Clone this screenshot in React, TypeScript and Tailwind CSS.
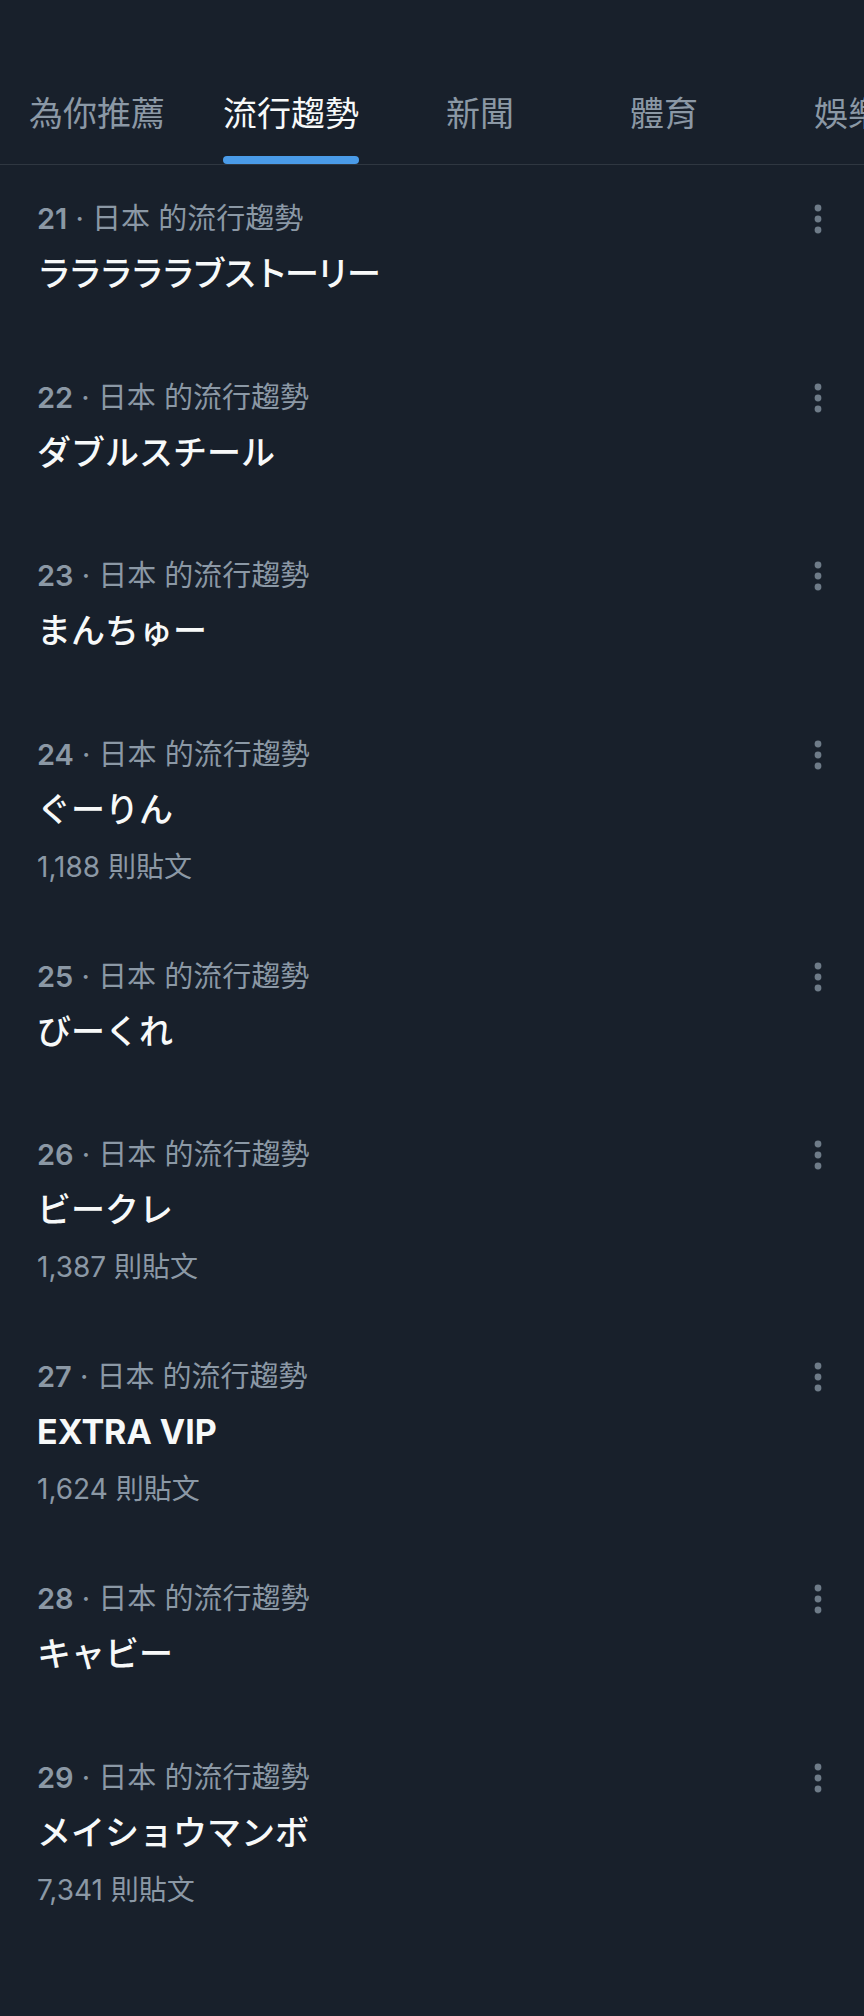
import React from "react";

type Trend = {
  rank: number;
  title: string;
  posts?: string;
  latin?: boolean;
  tight?: boolean;
};

const trends: Trend[] = [
  { rank: 21, title: "ラララララブストーリー", tight: true },
  { rank: 22, title: "ダブルスチール" },
  { rank: 23, title: "まんちゅー" },
  { rank: 24, title: "ぐーりん", posts: "1,188" },
  { rank: 25, title: "びーくれ" },
  { rank: 26, title: "ビークレ", posts: "1,387" },
  { rank: 27, title: "EXTRA VIP", posts: "1,624", latin: true },
  { rank: 28, title: "キャビー" },
  { rank: 29, title: "メイショウマンボ", posts: "7,341" },
];

const tabs = ["為你推薦", "流行趨勢", "新聞", "體育", "娛樂"];

function MoreIcon() {
  return (
    <svg width="8" height="30" viewBox="0 0 8 30" className="text-[#6e7b88]">
      <circle cx="4" cy="4" r="3.4" fill="currentColor" />
      <circle cx="4" cy="15" r="3.4" fill="currentColor" />
      <circle cx="4" cy="26" r="3.4" fill="currentColor" />
    </svg>
  );
}

function TrendRow({ trend }: { trend: Trend }) {
  return (
    <div
      className={`flex pl-[37px] pr-[35px] pt-[35px] ${
        trend.posts ? "pb-[38px]" : "pb-[47.5px]"
      }`}
    >
      <div className="flex-1 min-w-0">
        <div className="h-[38px] leading-[38px] text-[29px] text-[#8b98a5] whitespace-nowrap font-['Inter','Noto_Sans_CJK_TC',sans-serif]">
          <span className="font-semibold">{trend.rank}</span>
          <span> · 日本 的流行趨勢</span>
        </div>
        <div
          className={`mt-[14px] h-[44px] leading-[44px] text-[34px] text-[#f7f9f9] whitespace-nowrap font-['Inter','Noto_Sans_CJK_JP',sans-serif] ${
            trend.latin ? "font-bold" : "font-medium"
          } ${trend.tight ? "tracking-[-3px]" : ""}`}
        >
          {trend.title}
        </div>
        {trend.posts && (
          <div className="mt-[17px] h-9 leading-9 text-[28px] text-[#8b98a5] whitespace-nowrap font-['Inter','Noto_Sans_CJK_TC',sans-serif]">
            {trend.posts} 則貼文
          </div>
        )}
      </div>
      <div className="w-[22px] h-[38px] flex items-center justify-center">
        <MoreIcon />
      </div>
    </div>
  );
}

export default function App() {
  return (
    <div className="min-h-[2016px] w-[864px] bg-[#18202b] overflow-hidden">
      {/* Top tabs */}
      <div className="pt-[60px] border-b border-[#2f3741]">
        <div className="flex h-[104px] overflow-hidden">
          {tabs.map((tab, i) => {
            const active = i === 1;
            return (
              <div
                key={tab}
                className="shrink-0 min-w-[184px] px-[29px] flex justify-center h-full"
              >
                <div className="relative h-full flex items-center">
                  <span
                    className={`text-[34px] leading-none whitespace-nowrap font-['Noto_Sans_CJK_TC',sans-serif] ${
                      active ? "text-[#f7f9f9]" : "text-[#8b98a5]"
                    }`}
                  >
                    {tab}
                  </span>
                  {active && (
                    <div className="absolute bottom-0 left-0 right-0 h-2 rounded-full bg-[#4a9be8]" />
                  )}
                </div>
              </div>
            );
          })}
        </div>
      </div>

      {/* Trends list */}
      <div>
        {trends.map((t) => (
          <TrendRow key={t.rank} trend={t} />
        ))}
      </div>
    </div>
  );
}
